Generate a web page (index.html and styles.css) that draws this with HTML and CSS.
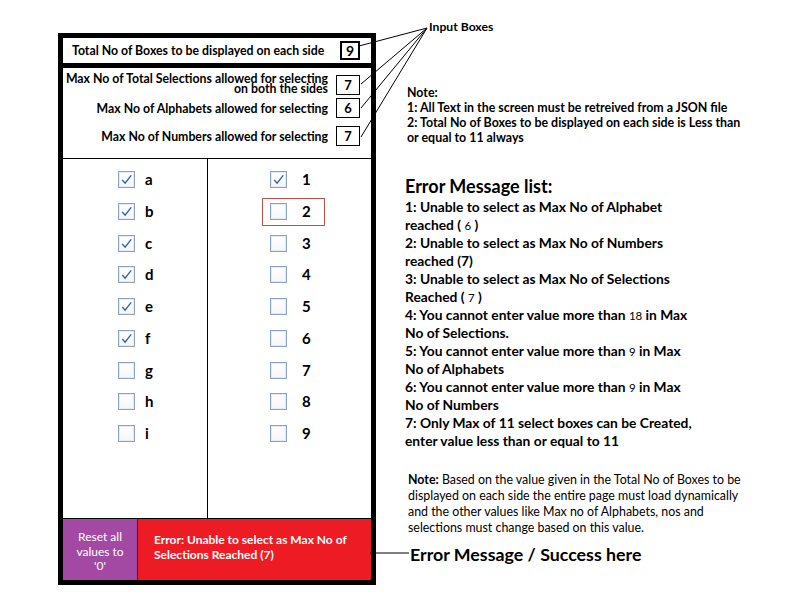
FILE: index.html
```html
<!DOCTYPE html>
<html>
<head>
<meta charset="utf-8">
<link rel="stylesheet" href="styles.css">
</head>
<body>
<div class="page">
  <div class="frame">
    <div class="row-total">
      <span class="lbl">Total No of Boxes to be displayed on each side</span>
      <span class="inp inp-main">9</span>
    </div>
    <div class="maxes">
      <div class="mrow mrow-1">
        <span class="lbl lbl-two">Max No of Total Selections allowed for selecting<br>on both the sides</span>
        <span class="inp">7</span>
      </div>
      <div class="mrow mrow-2">
        <span class="lbl">Max No of Alphabets allowed for selecting</span>
        <span class="inp">6</span>
      </div>
      <div class="mrow mrow-3">
        <span class="lbl">Max No of Numbers allowed for selecting</span>
        <span class="inp">7</span>
      </div>
    </div>
    <div class="cols">
      <div class="col col-left">
        <div class="item"><span class="cb on"><svg viewBox="0 0 16 16"><polyline points="3.5,8.5 6.5,12 13,3.5"/></svg></span><span class="name">a</span></div>
        <div class="item"><span class="cb on"><svg viewBox="0 0 16 16"><polyline points="3.5,8.5 6.5,12 13,3.5"/></svg></span><span class="name">b</span></div>
        <div class="item"><span class="cb on"><svg viewBox="0 0 16 16"><polyline points="3.5,8.5 6.5,12 13,3.5"/></svg></span><span class="name">c</span></div>
        <div class="item"><span class="cb on"><svg viewBox="0 0 16 16"><polyline points="3.5,8.5 6.5,12 13,3.5"/></svg></span><span class="name">d</span></div>
        <div class="item"><span class="cb on"><svg viewBox="0 0 16 16"><polyline points="3.5,8.5 6.5,12 13,3.5"/></svg></span><span class="name">e</span></div>
        <div class="item"><span class="cb on"><svg viewBox="0 0 16 16"><polyline points="3.5,8.5 6.5,12 13,3.5"/></svg></span><span class="name">f</span></div>
        <div class="item"><span class="cb"></span><span class="name">g</span></div>
        <div class="item"><span class="cb"></span><span class="name">h</span></div>
        <div class="item"><span class="cb"></span><span class="name">i</span></div>
      </div>
      <div class="col col-right">
        <div class="item"><span class="cb on"><svg viewBox="0 0 16 16"><polyline points="3.5,8.5 6.5,12 13,3.5"/></svg></span><span class="name">1</span></div>
        <div class="item hl"><span class="cb"></span><span class="name">2</span></div>
        <div class="item"><span class="cb"></span><span class="name">3</span></div>
        <div class="item"><span class="cb"></span><span class="name">4</span></div>
        <div class="item"><span class="cb"></span><span class="name">5</span></div>
        <div class="item"><span class="cb"></span><span class="name">6</span></div>
        <div class="item"><span class="cb"></span><span class="name">7</span></div>
        <div class="item"><span class="cb"></span><span class="name">8</span></div>
        <div class="item"><span class="cb"></span><span class="name">9</span></div>
      </div>
    </div>
    <div class="bottom">
      <div class="reset">Reset all<br>values to<br>'0'</div>
      <div class="error">Error: Unable to select as Max No of<br>Selections Reached (7)</div>
    </div>
  </div>

  <div class="side">
    <div class="input-label">Input Boxes</div>
    <div class="note1">
      Note:<br>
      1: All Text in the screen must be retreived from a JSON file<br>
      2: Total No of Boxes to be displayed on each side is Less than<br>
      or equal to 11 always
    </div>
    <div class="errlist">
      <div class="errtitle">Error Message list:</div>
      <div class="errlines">
        1: Unable to select as Max No of Alphabet<br>
        reached ( <span class="num">6</span> )<br>
        2: Unable to select as Max No of Numbers<br>
        reached (7)<br>
        3: Unable to select as Max No of Selections<br>
        Reached ( <span class="num">7</span> )<br>
        4: You cannot enter value more than <span class="num">18</span> in Max<br>
        No of Selections.<br>
        5: You cannot enter value more than <span class="num">9</span> in Max<br>
        No of Alphabets<br>
        6: You cannot enter value more than <span class="num">9</span> in Max<br>
        No of Numbers<br>
        7: Only Max of 11 select boxes can be Created,<br>
        enter value less than or equal to 11
      </div>
    </div>
    <div class="note2">
      <b>Note:</b> Based on the value given in the Total No of Boxes to be<br>
      displayed on each side the entire page must load dynamically<br>
      and the other values like Max no of Alphabets, nos and<br>
      selections must change based on this value.
    </div>
    <div class="msg">Error Message / Success here</div>
  </div>

  <svg class="arrows" width="796" height="612" viewBox="0 0 796 612">
    <line x1="427" y1="28" x2="359" y2="46"/>
    <line x1="427" y1="28" x2="361" y2="84"/>
    <line x1="427" y1="28" x2="361" y2="108"/>
    <line x1="427" y1="28" x2="361" y2="137"/>
    <line x1="370" y1="553" x2="409" y2="553"/>
  </svg>
</div>
</body>
</html>
```

FILE: styles.css
```css
* { box-sizing: border-box; }
html, body { margin: 0; padding: 0; background: #fff; }
body {
  font-family: "Lato", "Open Sans", "Liberation Sans", sans-serif;
  color: #000;
  width: 796px;
  height: 612px;
  overflow: hidden;
}
.page {
  position: relative;
  display: flex;
  align-items: flex-start;
  padding-left: 58px;
  width: 796px;
  height: 612px;
}
.frame {
  margin-top: 33px;
  width: 318px;
  height: 552px;
  border: 5px solid #000;
  display: flex;
  flex-direction: column;
}
.lbl {
  font-weight: 700;
  font-size: 12.3px;
  white-space: nowrap;
}
.row-total {
  height: 30px;
  border-bottom: 5px solid #000;
  display: flex;
  align-items: center;
  justify-content: space-between;
  padding: 0 11px 0 9px;
}
.inp {
  width: 24px;
  height: 20px;
  border: 1px solid #000;
  display: flex;
  align-items: center;
  justify-content: center;
  font-weight: 700;
  font-size: 13px;
  flex: none;
}
.inp-main {
  width: 20px;
  height: 19px;
  border-width: 2px;
  font-size: 14px;
}
.maxes {
  height: 91px;
  border-bottom: 1px solid #000;
  display: flex;
  flex-direction: column;
  align-items: flex-end;
  padding: 7px 11px 0 0;
}
.mrow {
  display: flex;
  align-items: center;
  justify-content: flex-end;
  gap: 8px;
}
.lbl-two {
  text-align: right;
  line-height: 10.5px;
  margin-top: -2px;
}
.mrow-2 { margin-top: 3px; }
.mrow-3 { margin-top: 8px; }
.cols {
  height: 360px;
  border-bottom: 1px solid #000;
  display: flex;
}
.col {
  display: flex;
  flex-direction: column;
  padding-top: 12px;
  gap: 14.75px;
}
.col-left {
  width: 145px;
  border-right: 1px solid #000;
  padding-left: 55px;
}
.col-right {
  flex: 1;
  padding-left: 62px;
}
.item {
  position: relative;
  display: flex;
  align-items: center;
  height: 17px;
}
.col-left .item { gap: 10px; }
.col-right .item { gap: 15px; }
.item.hl::after {
  content: "";
  position: absolute;
  left: -8px;
  top: -5px;
  width: 61px;
  height: 26px;
  border: 1px solid #c0504d;
}
.cb {
  width: 17px;
  height: 17px;
  border: 1px solid #8da2c0;
  background: linear-gradient(#ffffff, #f4f6f9);
  box-shadow: inset 0 0 0 1px #e6ebf2;
  flex: none;
  display: block;
}
.cb svg {
  display: block;
  width: 15px;
  height: 15px;
}
.cb svg polyline {
  fill: none;
  stroke: #3b5e97;
  stroke-width: 1.4;
}
.name {
  font-weight: 700;
  font-size: 15px;
  line-height: 17px;
}
.bottom {
  flex: 1;
  display: flex;
}
.reset {
  width: 75px;
  background: #a349a4;
  border-right: 1px solid #3a2040;
  color: #fff;
  font-size: 12px;
  line-height: 14.5px;
  text-align: center;
  padding-top: 11px;
}
.error {
  flex: 1;
  background: #ed1c24;
  color: #fff;
  font-weight: 700;
  font-size: 12px;
  line-height: 15px;
  padding: 13px 0 0 16px;
}
.side {
  margin-left: 29px;
  display: flex;
  flex-direction: column;
}
.input-label {
  margin-top: 20px;
  margin-left: 24px;
  font-weight: 700;
  font-size: 12.2px;
  line-height: 14px;
}
.note1 {
  margin-top: 51px;
  margin-left: 2px;
  font-weight: 700;
  font-size: 12.4px;
  line-height: 15px;
  white-space: nowrap;
}
.errlist { margin-top: 31px; }
.errtitle {
  font-weight: 700;
  font-size: 18px;
  line-height: 20px;
}
.errlines {
  margin-top: 2px;
  font-weight: 700;
  font-size: 13.8px;
  line-height: 18px;
  white-space: nowrap;
}
.num {
  font-weight: 400;
  font-size: 11.5px;
  line-height: 1;
}
.note2 {
  margin-top: 22px;
  margin-left: 3px;
  font-size: 12.4px;
  line-height: 16px;
  white-space: nowrap;
}
.msg {
  margin-top: 8px;
  margin-left: 5px;
  font-weight: 700;
  font-size: 17.8px;
  line-height: 20px;
  white-space: nowrap;
}
.arrows {
  position: absolute;
  left: 0;
  top: 0;
  pointer-events: none;
}
.arrows line {
  stroke: #000;
  stroke-width: 1;
}
```
